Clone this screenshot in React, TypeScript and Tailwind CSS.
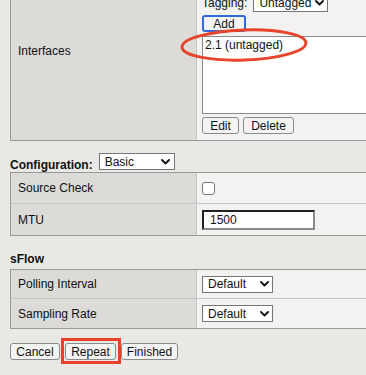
import React from "react"

function Chevron() {
  return (
    <svg width="9" height="6" viewBox="0 0 9 6" className="shrink-0">
      <polyline points="1,1 4.5,4.5 8,1" fill="none" stroke="#111" strokeWidth="1.8" strokeLinecap="round" strokeLinejoin="round" />
    </svg>
  )
}

function Select({ value, className }: { value: string; className: string }) {
  return (
    <div className={`flex h-[17px] shrink-0 items-center justify-between border border-[#767676] bg-white pl-[5px] pr-[3px] text-[#111] ${className}`}>
      <span className="whitespace-nowrap">{value}</span>
      <Chevron />
    </div>
  )
}

function Btn({ children, className = "" }: { children: React.ReactNode; className?: string }) {
  return (
    <div className={`flex h-[17px] items-center justify-center rounded-[3px] border border-[#8a8a8a] bg-[#f4f4f4] px-[6px] text-[#111] ${className}`}>
      {children}
    </div>
  )
}

function Row({ label, children, h, last }: { label: string; children?: React.ReactNode; h: string; last?: boolean }) {
  return (
    <div className={`flex ${h} ${last ? "" : "border-b border-[#c4c4c4]"}`}>
      <div className="flex w-[186px] shrink-0 items-center border-r border-[#c4c4c4] bg-[#dcdbd8] pl-[7px]">{label}</div>
      <div className="flex flex-1 items-center bg-[#f3f2f1] pl-[5px]">{children}</div>
    </div>
  )
}

export default function App() {
  return (
    <div className="relative h-[375px] w-[366px] overflow-hidden bg-[#e9e8e5] font-['Liberation_Sans',Arial,sans-serif] text-[12px] leading-[14px] text-[#111]">
      <div className="pl-[10px]">
        {/* Interfaces */}
        <div className="-mt-[33px] flex w-[400px] border border-[#999]">
          <div className="flex w-[186px] shrink-0 items-center border-r border-[#c4c4c4] bg-[#dcdbd8] pb-[6px] pl-[7px]">
            Interfaces
          </div>
          <div className="flex flex-1 flex-col bg-[#f3f2f1] pb-[6px] pl-[5px] pt-[5px]">
            <div className="flex h-[18px] items-center gap-[6px]">
              <span>Interface:</span>
              <Select value="1.1" className="w-[60px]" />
            </div>
            <div className="mt-[3px] flex h-[18px] items-center gap-[6px]">
              <span>Tagging:</span>
              <Select value="Untagged" className="w-[75px]" />
            </div>
            <div className="mt-[3px] flex h-[17px] w-[44px] items-center justify-center rounded-[3px] border-2 border-[#2f6bd9] bg-[#f4f4f4]">
              Add
            </div>
            <div className="mt-[4px] h-[78px] border border-[#8a8a8a] bg-white pl-[2px] pt-[1px]">
              2.1 (untagged)
            </div>
            <div className="mt-[3px] flex gap-[4px]">
              <Btn className="w-[37px]">Edit</Btn>
              <Btn className="w-[51px]">Delete</Btn>
            </div>
          </div>
        </div>

        {/* Configuration */}
        <div className="mt-[12px] flex items-start gap-[6px]">
          <span className="mt-[5px] font-bold">Configuration:</span>
          <div className="flex h-[17px] w-[76px] items-start justify-between border border-[#767676] bg-white pl-[5px] pr-[4px] pt-[1px]">
            <span>Basic</span>
            <div className="mt-[4px]">
              <Chevron />
            </div>
          </div>
        </div>

        <div className="w-[400px] border border-[#999]">
          <Row label="Source Check" h="h-[31px]">
            <div className="h-[13px] w-[13px] rounded-[3px] border border-[#767676] bg-white" />
          </Row>
          <Row label="MTU" h="h-[31px]" last>
            <input
              readOnly
              value="1500"
              className="h-[20px] w-[113px] border-2 border-b-[#8a8a8a] border-l-[#222] border-r-[#8a8a8a] border-t-[#222] bg-white pl-[6px] text-[12px] outline-none"
            />
          </Row>
        </div>

        {/* sFlow */}
        <div className="mt-[16px] font-bold">sFlow</div>
        <div className="mt-[3px] w-[400px] border border-[#999]">
          <Row label="Polling Interval" h="h-[29px]">
            <Select value="Default" className="w-[71px]" />
          </Row>
          <Row label="Sampling Rate" h="h-[29px]" last>
            <Select value="Default" className="w-[71px]" />
          </Row>
        </div>

        <div className="mt-[14px] flex">
          <Btn className="w-[50px]">Cancel</Btn>
          <Btn className="ml-[5px] w-[51px] bg-[#e6e6e6]">Repeat</Btn>
          <Btn className="ml-[5px] w-[57px]">Finished</Btn>
        </div>
      </div>

      {/* annotations */}
      <svg className="absolute left-[178px] top-[26px]" width="132" height="38" viewBox="0 0 132 38">
        <ellipse cx="66" cy="19" rx="62" ry="15" fill="none" stroke="#e8432b" strokeWidth="3" transform="rotate(-2 66 19)" />
      </svg>
      <div className="absolute left-[61px] top-[338px] h-[26px] w-[60px] border-[3px] border-[#e8402a]" />
    </div>
  )
}
